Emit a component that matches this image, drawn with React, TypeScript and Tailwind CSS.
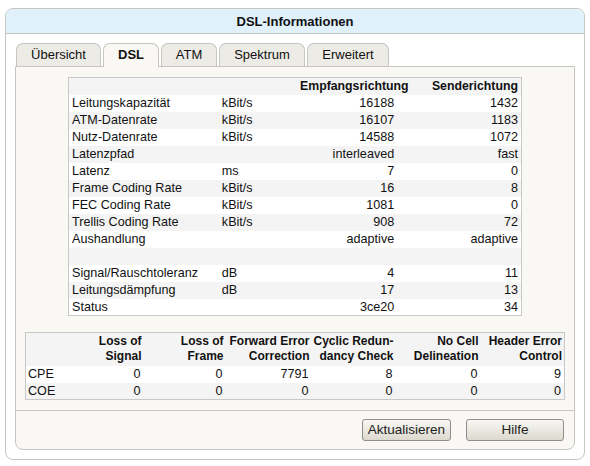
import React from "react";

const rows: [string, string, string, string][] = [
  ["Leitungskapazität", "kBit/s", "16188", "1432"],
  ["ATM-Datenrate", "kBit/s", "16107", "1183"],
  ["Nutz-Datenrate", "kBit/s", "14588", "1072"],
  ["Latenzpfad", "", "interleaved", "fast"],
  ["Latenz", "ms", "7", "0"],
  ["Frame Coding Rate", "kBit/s", "16", "8"],
  ["FEC Coding Rate", "kBit/s", "1081", "0"],
  ["Trellis Coding Rate", "kBit/s", "908", "72"],
  ["Aushandlung", "", "adaptive", "adaptive"],
  ["", "", "", ""],
  ["Signal/Rauschtoleranz", "dB", "4", "11"],
  ["Leitungsdämpfung", "dB", "17", "13"],
  ["Status", "", "3ce20", "34"],
];

const errRows: [string, string[]][] = [
  ["CPE", ["0", "0", "7791", "8", "0", "9"]],
  ["COE", ["0", "0", "0", "0", "0", "0"]],
];

const errHeads: [string, string][] = [
  ["Loss of", "Signal"],
  ["Loss of", "Frame"],
  ["Forward Error", "Correction"],
  ["Cyclic Redun-", "dancy Check"],
  ["No Cell", "Delineation"],
  ["Header Error", "Control"],
];

const errWidths = ["w-[78px]", "w-[82px]", "w-[86px]", "w-[84px]", "w-[85px]", "w-[84px]"];

const tabs = [
  { label: "Übersicht", w: "w-[85px]", active: false },
  { label: "DSL", w: "w-[56px]", active: true },
  { label: "ATM", w: "w-[56px]", active: false },
  { label: "Spektrum", w: "w-[86px]", active: false },
  { label: "Erweitert", w: "w-[82px]", active: false },
];

export default function App() {
  return (
    <div
      className="w-[590px] h-[466px] bg-white pt-[8px] pl-[5px] text-[#111]"
      style={{ fontFamily: '"Liberation Sans", Arial, sans-serif' }}
    >
      <div className="w-[580px] h-[452px] border border-[#c6c5bf] rounded-[8px] flex flex-col bg-white">
        <div className="h-[25px] bg-[#e0f1fc] border-b border-[#c6c5bf] rounded-t-[7px] text-center text-[13px] font-bold leading-[25px]">
          DSL-Informationen
        </div>
        <div className="flex-1 px-[9px] pt-[9px] pb-[9px] flex flex-col">
          <div className="flex gap-[2px] pl-[1px] h-[23px] items-end relative z-10">
            {tabs.map((t) => (
              <div
                key={t.label}
                className={
                  t.active
                    ? `${t.w} h-[24px] -mb-px bg-[#f9f8f4] border border-b-0 border-[#c6c5bf] rounded-t-[7px] text-center text-[13px] font-bold leading-[22px]`
                    : `${t.w} h-[23px] bg-[#ecebe5] border border-b-0 border-[#c6c5bf] rounded-t-[7px] text-center text-[13px] leading-[22px]`
                }
              >
                {t.label}
              </div>
            ))}
          </div>
          <div className="flex-1 border border-[#c6c5bf] rounded-b-[8px] bg-[#f9f8f4] flex flex-col">
            <div className="h-[344px] border-b border-[#c6c5bf] flex flex-col items-center pt-[10px]">
              <table className="w-[454px] table-fixed border border-[#c8c8c8] border-collapse text-[12.6px] bg-white">
                <colgroup>
                  <col className="w-[150px]" />
                  <col className="w-[81px]" />
                  <col className="w-[97px]" />
                  <col className="w-[124px]" />
                </colgroup>
                <tbody>
                  <tr className="h-[17px] bg-[#f4f4f4] font-bold text-[12.3px]">
                    <td></td>
                    <td></td>
                    <td className="text-right pr-[3px] leading-[16px] whitespace-nowrap">Empfangsrichtung</td>
                    <td className="text-right pr-[3px] leading-[16px]">Senderichtung</td>
                  </tr>
                  {rows.map((r, i) => (
                    <tr key={i} className={`h-[17px] ${i % 2 === 0 ? "bg-white" : "bg-[#f4f4f4]"}`}>
                      <td className="pl-[3px] leading-[16px] whitespace-nowrap">{r[0]}</td>
                      <td className="pl-[3px] leading-[16px]">{r[1]}</td>
                      <td className="text-right pr-[3px] leading-[16px]">{r[2]}</td>
                      <td className="text-right pr-[3px] leading-[16px]">{r[3]}</td>
                    </tr>
                  ))}
                </tbody>
              </table>
              <table className="mt-[16px] w-[540px] table-fixed border border-[#c8c8c8] border-collapse text-[12.6px] bg-white">
                <colgroup>
                  <col className="w-[40px]" />
                  {errWidths.map((w, i) => (
                    <col key={i} className={w} />
                  ))}
                </colgroup>
                <tbody>
                  <tr className="h-[33px] bg-[#f4f4f4] font-bold text-[12px]">
                    <td></td>
                    {errHeads.map((h, i) => (
                      <td key={i} className="text-right pr-[2px] leading-[15px] align-middle whitespace-nowrap">
                        {h[0]}
                        <br />
                        {h[1]}
                      </td>
                    ))}
                  </tr>
                  {errRows.map((r, i) => (
                    <tr key={i} className={`h-[17px] ${i % 2 === 0 ? "bg-white" : "bg-[#f4f4f4]"}`}>
                      <td className="pl-[2px] leading-[16px]">{r[0]}</td>
                      {r[1].map((v, j) => (
                        <td key={j} className="text-right pr-[3px] leading-[16px]">
                          {v}
                        </td>
                      ))}
                    </tr>
                  ))}
                </tbody>
              </table>
            </div>
            <div className="flex-1 flex justify-end items-start pt-[8px] pr-[10px] gap-[15px]">
              <button className="w-[89px] h-[22px] border border-[#8e8e8e] rounded-[3px] bg-gradient-to-b from-[#f8f7f3] to-[#dcd9cf] text-[13.5px] leading-[20px] text-[#222]">
                Aktualisieren
              </button>
              <button className="w-[98px] h-[22px] border border-[#8e8e8e] rounded-[3px] bg-gradient-to-b from-[#f8f7f3] to-[#dcd9cf] text-[13.5px] leading-[20px] text-[#222]">
                Hilfe
              </button>
            </div>
          </div>
        </div>
      </div>
    </div>
  );
}
